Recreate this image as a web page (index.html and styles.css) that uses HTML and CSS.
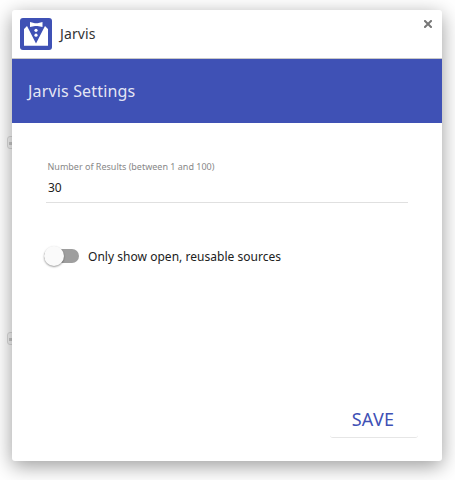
FILE: index.html
```
<!DOCTYPE html>
<html lang="en">
<head>
<meta charset="utf-8">
<title>Jarvis</title>
<link rel="stylesheet" href="styles.css">
</head>
<body>
<span class="handle handle-top"></span>
<span class="handle handle-bottom"></span>
<main class="dialog">
  <header class="titlebar">
    <svg class="logo" viewBox="0 0 32 32" width="32" height="32">
      <rect width="32" height="32" rx="3" fill="#3f51b5"/>
      <path d="M4 27.7V11L7 8L16 25.4L25 8L28 11V27.7Z" fill="#fff"/>
      <path d="M10 4L15 5.2H17.5L22.5 4V9L17.5 8H15L10 9Z" fill="#fff"/>
      <circle cx="16" cy="12.3" r="1.6" fill="#fff"/>
      <circle cx="16" cy="17.2" r="1.6" fill="#fff"/>
    </svg>
    <h1 class="name">Jarvis</h1>
    <svg class="close" viewBox="0 0 8 8" width="8" height="8"><path d="M1 1L7 7M7 1L1 7" stroke="#777" stroke-width="2" stroke-linecap="square"/></svg>
  </header>
  <h2 class="toolbar">Jarvis Settings</h2>
  <section class="content">
    <div class="field">
      <span class="label">Number of Results (between 1 and 100)</span>
      <span class="value">30</span>
    </div>
    <div class="option">
      <span class="switch"><span class="thumb"></span></span>
      <span class="option-text">Only show open, reusable sources</span>
    </div>
    <button class="save">SAVE</button>
  </section>
</main>
</body>
</html>
```
FILE: styles.css
```
* { box-sizing: border-box; }
body {
  margin: 0;
  padding: 10px 13px 19px 12px;
  height: 480px;
  overflow: hidden;
  background: #fff;
  font-family: "Noto Sans", sans-serif;
}
.dialog {
  position: relative;
  display: flex;
  flex-direction: column;
  height: 451px;
  background: #fff;
  border-radius: 3px;
  box-shadow: 0 5px 20px rgba(0, 0, 0, .4);
}
.handle {
  position: absolute;
  left: 7px;
  width: 14px;
  height: 13px;
  border: 1px solid #ddd;
  border-radius: 3px;
  background: linear-gradient(#ccc, #ccc) 1px 5px / 4px 3px no-repeat #f8f8f8;
}
.handle-top { top: 136px; }
.handle-bottom { top: 332px; }
.titlebar {
  display: flex;
  height: 49px;
  padding: 8px 10px 0 8px;
  border-bottom: 1px solid #c8c8c8;
}
.name {
  flex: 1;
  margin: 0 0 0 8px;
  font-size: 14px;
  font-weight: 400;
  line-height: 32px;
  letter-spacing: .1px;
  color: #333;
}
.close { margin-top: 2px; }
.toolbar {
  height: 64px;
  margin: 0;
  padding-left: 16px;
  background: #3f51b5;
  color: rgba(255, 255, 255, .87);
  font-size: 16px;
  font-weight: 400;
  line-height: 64px;
  letter-spacing: .16px;
}
.content {
  display: flex;
  flex: 1;
  flex-direction: column;
  padding: 36px 25px 23px 34px;
}
.field {
  display: flex;
  flex-direction: column;
  width: 362px;
  height: 44px;
  padding-left: 2px;
  border-bottom: 1px solid #e0e0e0;
}
.label {
  margin-left: -.5px;
  font-size: 9px;
  line-height: 16px;
  color: #888;
}
.value {
  margin-top: 3px;
  font-size: 12px;
  line-height: 20px;
  color: #212121;
}
.option {
  display: flex;
  align-items: center;
  margin-top: 43px;
  height: 20px;
  margin-left: -2px;
}
.switch {
  width: 35px;
  height: 14px;
  border-radius: 7px;
  background: #9e9e9e;
}
.thumb {
  display: block;
  width: 20px;
  height: 20px;
  margin-top: -3px;
  border-radius: 50%;
  background: #fafafa;
  box-shadow: 0 1px 2px rgba(0, 0, 0, .4);
}
.option-text {
  margin: 2px 0 0 9px;
  font-size: 12px;
  line-height: 20px;
  letter-spacing: .03px;
  color: #212121;
}
.save {
  width: 88px;
  height: 36px;
  margin: auto -1px 0 0;
  padding: 0 2px 0 0;
  align-self: flex-end;
  border: 0;
  border-bottom: 1px solid #e6e6e6;
  border-radius: 3px;
  background: none;
  color: #3f51b5;
  font: 400 18px/35px "Noto Sans", sans-serif;
  letter-spacing: .3px;
}
```
